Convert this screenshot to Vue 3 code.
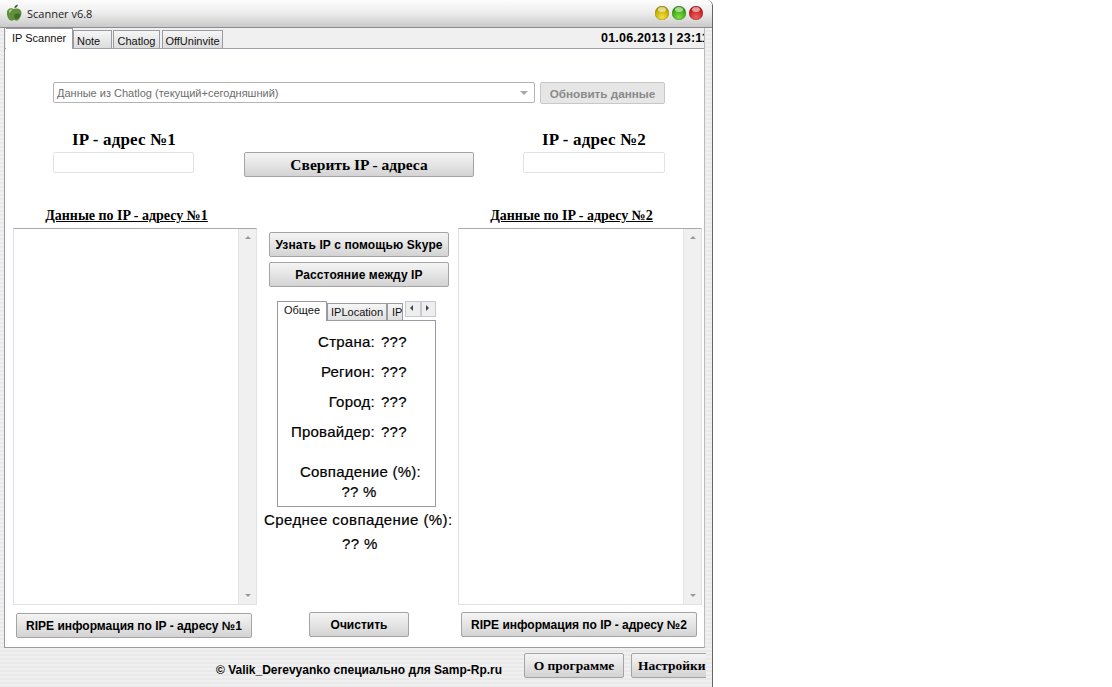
<script setup>
import {ref} from 'vue'

const tabs = ref([
    {name: 'Note', cls: 'tab-note'},
    {name: 'Chatlog', cls: 'tab-chatlog'},
    {name: 'OffUninvite', cls: 'tab-off'},
])
const infoRows = ref([
    {label: 'Страна:', value: '???'},
    {label: 'Регион:', value: '???'},
    {label: 'Город:', value: '???'},
    {label: 'Провайдер:', value: '???'},
])
</script>

<template>
<div class="window">
    <div class="titlebar">
        <svg class="apple" width="16" height="18" viewBox="0 0 16 18">
            <path d="M8 5C6 3.600 2.800 3.800 1.500 6.200C0.200 8.800 1.200 13 3 15.300C4.200 16.800 5.500 17 6.500 16.400C7.500 15.900 8.500 15.900 9.500 16.400C10.800 17 12 16.500 13.200 15C14.600 13.200 15.500 10.800 15.500 8.800C15.500 5 11 3.700 8 5Z" fill="#5f8f3a"/>
            <path d="M3 7C3.800 5.600 5.500 5.200 6.800 5.800C5 6.400 4.200 7.600 3.900 9.600Z" fill="#b9dc8f"/>
            <path d="M8.300 4.200C8.500 2.300 9.800 0.800 11.800 0.500C11.800 2.500 10.400 4 8.300 4.200Z" fill="#3c5a2a"/>
            <path d="M9 10C10.500 9 13 9.500 14.500 10.500C14 13 12 15.500 9.500 15C8 13.500 8 11.500 9 10Z" fill="#3f6a2a"/>
        </svg>
        <span class="title-text">Scanner v6.8</span>
        <div class="lights">
            <span class="light yellow"></span>
            <span class="light green"></span>
            <span class="light red"></span>
        </div>
    </div>

    <div class="panel">
        <div class="tabbar">
            <div class="tab active">IP Scanner</div>
            <div v-for="tab in tabs" :key="tab.name" class="tab" :class="tab.cls">{{ tab.name }}</div>
            <div class="clock">01.06.2013 | 23:11</div>
        </div>

        <div class="combo-row">
            <div class="combo">
                <span>Данные из Chatlog (текущий+сегодняшний)</span>
                <i class="combo-arrow"></i>
            </div>
            <button class="btn refresh" disabled>Обновить данные</button>
        </div>

        <div class="ip-row">
            <div class="ip-field">
                <div class="ip-label">IP - адрес №1</div>
                <div class="ip-input first"></div>
            </div>
            <button class="btn serif compare">Сверить IP - адреса</button>
            <div class="ip-field">
                <div class="ip-label">IP - адрес №2</div>
                <div class="ip-input"></div>
            </div>
        </div>

        <div class="columns">
            <div class="side">
                <div class="side-title">Данные по IP - адресу №1</div>
                <div class="listbox">
                    <div class="scrollbar"><i class="up"></i><i class="down"></i></div>
                </div>
                <button class="btn ripe left">RIPE информация по IP - адресу №1</button>
            </div>

            <div class="middle">
                <button class="btn mid">Узнать IP с помощью Skype</button>
                <button class="btn mid">Расстояние между IP</button>

                <div class="inner-tabs">
                    <div class="inner-tab active">Общее</div>
                    <div class="inner-tab">IPLocation</div>
                    <div class="inner-tab cut">IP</div>
                    <div class="spin"><span class="l"></span><span class="r"></span></div>
                </div>
                <div class="inner-panel">
                    <div v-for="row in infoRows" :key="row.label" class="info-row">
                        <span class="info-label">{{ row.label }}</span>
                        <span>{{ row.value }}</span>
                    </div>
                    <div class="match">Совпадение (%):</div>
                    <div class="match-value">?? %</div>
                </div>
                <div class="avg">Среднее совпадение (%):</div>
                <div class="avg-value">?? %</div>
                <button class="btn clear">Очистить</button>
            </div>

            <div class="side right-side">
                <div class="side-title">Данные по IP - адресу №2</div>
                <div class="listbox">
                    <div class="scrollbar"><i class="up"></i><i class="down"></i></div>
                </div>
                <button class="btn ripe right">RIPE информация по IP - адресу №2</button>
            </div>
        </div>
    </div>

    <div class="footer">
        <span class="copy">© Valik_Derevyanko специально для Samp-Rp.ru</span>
        <button class="btn serif small about">О программе</button>
        <div class="settings-clip"><button class="btn serif small settings">Настройки</button></div>
    </div>
</div>
</template>

<style>
html, body {
    background: #fff;
    overflow: hidden;
}
</style>

<style scoped>
.window {
    width: 712px;
    height: 687px;
    border-right: 1px solid #666;
    border-top-right-radius: 6px;
    overflow: hidden;
    font-family: "Liberation Sans", Arial, sans-serif;
    color: #000;
    background: repeating-linear-gradient(to bottom, #f0f0f0 0, #f0f0f0 2px, #e9e9e9 2px, #e9e9e9 4px);
}

.titlebar {
    height: 27px;
    display: flex;
    align-items: center;
    padding-left: 6px;
    border-bottom: 1px solid #8c8c8c;
    background: linear-gradient(to bottom, #fdfdfd, #eeeeee 45%, #c9c9c9);
}
.apple {
    margin-right: 5px;
    margin-top: -1px;
}
.title-text {
    font-family: "Open Sans", sans-serif;
    font-size: 11px;
    color: #222;
    margin-top: -1px;
}
.lights {
    margin-left: auto;
    margin-right: 9px;
    display: flex;
    gap: 3px;
    margin-top: -1px;
}
.light {
    width: 14px;
    height: 14px;
    border-radius: 50%;
    box-shadow: inset 0 0 1px rgba(0,0,0,.6);
    position: relative;
}
.light::after {
    content: "";
    position: absolute;
    left: 3px;
    top: 1px;
    width: 8px;
    height: 5px;
    border-radius: 50%;
    background: rgba(255,255,255,.55);
}
.yellow { background: radial-gradient(circle at 50% 80%, #f5e23c, #c2ad00 60%, #8c7d00); }
.green { background: radial-gradient(circle at 50% 80%, #7fe040, #3aa512 60%, #2a7a0a); }
.red { background: radial-gradient(circle at 50% 80%, #f06060, #c92020 60%, #8e1515); }

.panel {
    margin-left: 4px;
    width: 701px;
    height: 620px;
    box-sizing: border-box;
    background: #fff;
    border: 1px solid #9a9aa2;
    border-top: none;
    border-right-color: #bbb;
}

.tabbar {
    height: 20px;
    display: flex;
    align-items: flex-end;
    background: #f0f0f0;
    border-bottom: 1px solid #a0a0a8;
    padding-left: 1px;
}
.tab {
    font-size: 11px;
    height: 18px;
    line-height: 20px;
    box-sizing: border-box;
    text-align: center;
    background: linear-gradient(to bottom, #f6f6f6, #dcdcdc);
    border: 1px solid #9a9aa2;
    border-bottom: none;
    margin-left: 1px;
    color: #111;
    white-space: nowrap;
}
.tab-note { width: 39px; margin-left: 0; text-align: left; padding-left: 3px; }
.tab-chatlog { width: 47px; }
.tab-off { width: 61px; margin-left: 2px; }
.tab.active {
    height: 21px;
    line-height: 19px;
    width: 67px;
    margin: 0 0 -1px 0;
    background: #fff;
    padding-left: 6px;
    text-align: left;
    z-index: 1;
    border-left: none;
}
.clock {
    margin-left: auto;
    font-size: 12.5px;
    font-weight: bold;
    white-space: nowrap;
    width: 103px;
    overflow: hidden;
    line-height: 21px;
    height: 20px;
    letter-spacing: 0.2px;
}

.btn {
    display: block;
    padding: 0;
    font-family: "Liberation Sans", Arial, sans-serif;
    font-weight: bold;
    font-size: 12px;
    color: #000;
    background: linear-gradient(to bottom, #f4f4f4 0, #e6e6e6 45%, #d3d3d3 100%);
    border: 1px solid #a4a4a4;
    border-radius: 2px;
    white-space: nowrap;
}
.btn.serif {
    font-family: "Liberation Serif", serif;
}

.combo-row {
    display: flex;
    margin: 33px 0 0 48px;
    gap: 5px;
}
.combo {
    width: 482px;
    height: 21px;
    box-sizing: border-box;
    border: 1px solid #b4b4b4;
    border-radius: 2px;
    display: flex;
    align-items: center;
    justify-content: space-between;
    padding: 0 6px 0 3px;
    font-size: 11px;
    color: #6d6d6d;
}
.combo-arrow {
    width: 0;
    height: 0;
    border-left: 4px solid transparent;
    border-right: 4px solid transparent;
    border-top: 4px solid #a8a8a8;
}
.refresh {
    width: 125px;
    height: 22px;
    color: #8a8a8a;
    background: #e6e6e6;
    border-color: #c8c8c8;
    font-size: 11.7px;
}

.ip-row {
    display: flex;
    align-items: flex-start;
    margin: 27px 0 0 48px;
    width: 612px;
    justify-content: space-between;
}
.ip-field {
    width: 142px;
}
.ip-label {
    font-family: "Liberation Serif", serif;
    font-weight: bold;
    font-size: 17px;
    height: 21px;
    line-height: 18px;
    text-align: center;
    white-space: nowrap;
    letter-spacing: 0.15px;
}
.ip-input {
    height: 21px;
    box-sizing: border-box;
    border: 1px solid #dfe3e8;
    border-radius: 2px;
}
.ip-input.first {
    width: 141px;
}
.compare {
    width: 230px;
    height: 25px;
    margin-top: 21px;
    font-size: 15.5px;
}

.columns {
    display: flex;
    margin: 30px 0 0 8px;
}
.side {
    width: 244px;
}
.side-title {
    font-family: "Liberation Serif", serif;
    font-weight: bold;
    font-size: 14px;
    text-decoration: underline;
    text-align: center;
    height: 21px;
    line-height: 18px;
    margin-left: -6px;
    width: 239px;
    white-space: nowrap;
}
.right-side .side-title {
    margin-left: 0;
    width: 227px;
}
.listbox {
    width: 244px;
    height: 377px;
    box-sizing: border-box;
    border: 1px solid #dfe3e8;
    border-top-color: #aaa;
    display: flex;
    justify-content: flex-end;
}
.scrollbar {
    width: 17px;
    background: #f0f0f0;
    border-left: 1px solid #e4e4e4;
    display: flex;
    flex-direction: column;
    justify-content: space-between;
    align-items: center;
    padding: 7px 0;
}
.up, .down {
    width: 0;
    height: 0;
    border-left: 3px solid transparent;
    border-right: 3px solid transparent;
}
.up { border-bottom: 3px solid #999; }
.down { border-top: 3px solid #999; }

.ripe {
    width: 236px;
    height: 25px;
    font-size: 12px;
}
.ripe.left {
    margin: 8px 0 0 3px;
}
.ripe.right {
    margin: 7px 0 0 3px;
}

.middle {
    width: 201px;
    display: flex;
    flex-direction: column;
    align-items: flex-start;
    position: relative;
    padding-top: 25px;
}
.mid {
    width: 180px;
    height: 25px;
    margin: 0 0 5px 12px;
    letter-spacing: 0.1px;
}

.inner-tabs {
    margin: 8px 0 0 20px;
    width: 159px;
    height: 20px;
    display: flex;
    align-items: flex-end;
    position: relative;
}
.inner-tab {
    font-size: 11px;
    height: 17px;
    line-height: 17px;
    box-sizing: border-box;
    padding: 0 3px;
    background: linear-gradient(to bottom, #f6f6f6, #e0e0e0);
    border: 1px solid #9a9aa2;
    border-bottom: none;
    color: #111;
    white-space: nowrap;
}
.inner-tab.active {
    background: #fff;
    height: 20px;
    padding: 0 6px;
    margin-bottom: -1px;
    z-index: 1;
    line-height: 17px;
}
.inner-tab.cut {
    padding: 0 0 0 4px;
    width: 16px;
    overflow: hidden;
}
.spin {
    position: absolute;
    right: 0;
    top: 1px;
    width: 31px;
    height: 16px;
    display: flex;
    background: #eee;
}
.spin span {
    flex: 1;
    border: 1px solid #c8c8d0;
    position: relative;
}
.spin span::after {
    content: "";
    position: absolute;
    top: 3px;
    left: 4px;
    border-top: 3px solid transparent;
    border-bottom: 3px solid transparent;
}
.spin .l::after { border-right: 3px solid #445; }
.spin .r::after { border-left: 3px solid #445; }

.inner-panel {
    margin-left: 20px;
    width: 159px;
    height: 187px;
    box-sizing: border-box;
    border: 1px solid #9a9aa2;
    padding-top: 6px;
    font-size: 15px;
    letter-spacing: 0.25px;
    white-space: nowrap;
}
.info-row {
    display: flex;
    height: 30px;
    line-height: 30px;
    -webkit-text-stroke: 0.2px #000;
}
.info-label {
    width: 97px;
    text-align: right;
    margin-right: 6px;
}
.match {
    text-align: right;
    padding-right: 14px;
    margin-top: 15px;
    -webkit-text-stroke: 0.2px #000;
    height: 20px;
    line-height: 20px;
}
.match-value {
    text-align: center;
    padding-left: 5px;
    height: 20px;
    line-height: 20px;
    -webkit-text-stroke: 0.2px #000;
}
.avg, .avg-value {
    font-size: 15px;
    letter-spacing: 0.4px;
    -webkit-text-stroke: 0.2px #000;
    white-space: nowrap;
}
.avg {
    margin: 3px 0 0 7px;
    height: 20px;
    line-height: 20px;
}
.avg-value {
    margin: 4px 0 0 85px;
    height: 20px;
    line-height: 20px;
}
.clear {
    position: absolute;
    left: 52px;
    top: 405px;
    width: 100px;
    height: 25px;
}

.footer {
    height: 39px;
    display: flex;
    align-items: flex-start;
    padding-top: 5px;
    box-sizing: border-box;
    margin-left: 4px;
}
.copy {
    font-size: 12px;
    font-weight: bold;
    margin: 10px 0 0 212px;
    white-space: nowrap;
    width: 308px;
}
.small {
    height: 25px;
    font-size: 13.5px;
}
.about {
    width: 100px;
}
.settings-clip {
    margin-left: 7px;
    width: 75px;
    overflow: hidden;
}
.settings {
    width: 100px;
    text-align: left;
    padding-left: 6px;
}
</style>
